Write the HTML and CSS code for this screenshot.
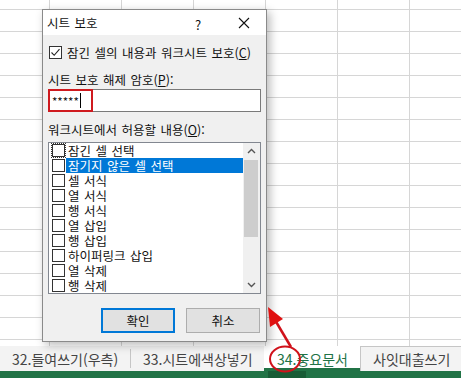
FILE: index.html
```html
<html lang="ko">
<head>
    <meta charset="UTF-8">
    <link rel="stylesheet" href="styles.css">
    <title>시트 보호</title>
</head>
<body>
    <div class="sheet">
        <div class="grid"></div>

        <div class="tabs">
            <div class="tab first">32.들여쓰기(우측)</div>
            <div class="tab sep">33.시트에색상넣기</div>
            <div class="tab active">34.중요문서</div>
            <div class="tab next">사잇대출쓰기</div>
        </div>
        <div class="status"><span class="status-dark"></span></div>

        <div class="dialog">
            <div class="title-bar">
                <span class="title">시트 보호</span>
                <span class="help">?</span>
                <svg class="close" width="12" height="12" viewBox="0 0 12 12">
                    <path d="M1 1 L11 11 M11 1 L1 11" stroke="#111" stroke-width="1.1" fill="none"/>
                </svg>
            </div>
            <div class="dialog-body">
                <div class="check-row">
                    <span class="box checked">
                        <svg width="11" height="11" viewBox="0 0 11 11">
                            <path d="M1.5 5.5 L4.2 8.3 L9.5 2.2" stroke="#222" stroke-width="1.1" fill="none"/>
                        </svg>
                    </span>
                    <span>잠긴 셀의 내용과 워크시트 보호(<u>C</u>)</span>
                </div>
                <div class="label">시트 보호 해제 암호(<u>P</u>):</div>
                <div class="pw">
                    <span class="stars">*****</span><span class="caret"></span>
                    <span class="mark"></span>
                </div>
                <div class="label label-o">워크시트에서 허용할 내용(<u>O</u>):</div>
                <div class="list">
                    <div class="rows">
                        <div class="row"><span class="box focus"></span><span class="text">잠긴 셀 선택</span></div>
                        <div class="row"><span class="box"></span><span class="text selected">잠기지 않은 셀 선택</span></div>
                        <div class="row"><span class="box"></span><span class="text">셀 서식</span></div>
                        <div class="row"><span class="box"></span><span class="text">열 서식</span></div>
                        <div class="row"><span class="box"></span><span class="text">행 서식</span></div>
                        <div class="row"><span class="box"></span><span class="text">열 삽입</span></div>
                        <div class="row"><span class="box"></span><span class="text">행 삽입</span></div>
                        <div class="row"><span class="box"></span><span class="text">하이퍼링크 삽입</span></div>
                        <div class="row"><span class="box"></span><span class="text">열 삭제</span></div>
                        <div class="row"><span class="box"></span><span class="text">행 삭제</span></div>
                    </div>
                    <div class="scrollbar">
                        <svg class="arrow" width="17" height="16" viewBox="0 0 17 16">
                            <path d="M5 10 L8.5 6.5 L12 10" stroke="#555" stroke-width="1.4" fill="none"/>
                        </svg>
                        <div class="thumb"></div>
                        <div class="track"></div>
                        <svg class="arrow" width="17" height="16" viewBox="0 0 17 16">
                            <path d="M5 6 L8.5 9.5 L12 6" stroke="#555" stroke-width="1.4" fill="none"/>
                        </svg>
                    </div>
                </div>
                <div class="buttons">
                    <button type="button" class="btn default">확인</button>
                    <button type="button" class="btn">취소</button>
                </div>
            </div>
        </div>

        <svg class="annot" width="461" height="378" viewBox="0 0 461 378">
            <ellipse cx="285" cy="359" rx="15" ry="12.5" stroke="#d0121b" stroke-width="2" fill="none"/>
            <path d="M291 347 L275 320" stroke="#d0121b" stroke-width="2.5" fill="none"/>
            <polygon points="268,307 283,319 270,327" fill="#e01010"/>
        </svg>
    </div>
</body>
</html>
```

FILE: styles.css
```css
body {
    margin: 0;
    background-color: #ffffff;
    font-family: "Noto Sans CJK KR", "Noto Sans", sans-serif;
}

.sheet {
    position: relative;
    width: 461px;
    height: 378px;
    display: flex;
    flex-direction: column;
    overflow: hidden;
}

/* grille Excel */
.grid {
    height: 346px;
    background-color: #ffffff;
    background-image:
        linear-gradient(#d6d6d6 1px, transparent 1px),
        linear-gradient(90deg, #d6d6d6 1px, transparent 1px);
    background-size: 72px 22px;
    background-position: 49px 9px;
}

.tabs {
    height: 25px;
    display: flex;
    background-color: #f3f3f3;
    font-size: 14px;
    color: #444;
}

.tab {
    display: flex;
    align-items: center;
    flex: none;
    box-sizing: border-box;
    line-height: 1;
    white-space: nowrap;
}

.tab.first {
    width: 130px;
    padding-left: 12px;
}

.tab.sep {
    width: 134px;
    border-left: 1px solid #c6c6c6;
    margin: 3px 0;
    padding-left: 12px;
}

.tab.active {
    width: 96px;
    background-color: #ffffff;
    color: #217346;
    border-bottom: 3px solid #217346;
    padding: 3px 0 0 13px;
}

.tab.next {
    border-left: 1px solid #c6c6c6;
    border-top: 1px solid #c6c6c6;
    padding-left: 12px;
    flex: 1;
}

.status {
    height: 7px;
    background-color: #217346;
    display: flex;
}

.status-dark {
    margin-left: 268px;
    width: 38px;
    background-color: #185c36;
}

/* boîte de dialogue */
.dialog {
    position: absolute;
    left: 42px;
    top: 9px;
    width: 223px;
    height: 331px;
    border: 1px solid #8a8a8a;
    background-color: #f0f0f0;
    box-shadow: 3px 3px 9px rgba(0, 0, 0, 0.28);
    font-size: 12.5px;
    word-spacing: 1px;
    color: #111;
}

.title-bar {
    height: 25px;
    background-color: #ffffff;
    display: flex;
    align-items: center;
    position: relative;
}

.title {
    margin-left: 4px;
}

.help {
    position: absolute;
    left: 152px;
    top: 5px;
    font-size: 13px;
}

.close {
    position: absolute;
    left: 195px;
    top: 7px;
}

.dialog-body {
    padding: 0 5px;
}

.check-row {
    display: flex;
    align-items: center;
    height: 16px;
    margin-top: 9px;
    margin-left: 1px;
}

.box {
    width: 11px;
    height: 11px;
    border: 1px solid #333;
    background-color: #ffffff;
    flex: none;
    display: flex;
}

.check-row .box {
    margin-right: 5px;
}

.box.focus {
    outline: 1px dotted #333;
}

.label {
    height: 16px;
    line-height: 16px;
    margin-top: 12px;
}

.pw {
    position: relative;
    height: 21px;
    margin-top: 1px;
    border: 1px solid #7a7a7a;
    background-color: #ffffff;
    display: flex;
    align-items: center;
}

.stars {
    margin-left: 3px;
    font-size: 11.5px;
    letter-spacing: 0;
}

.caret {
    width: 1px;
    height: 15px;
    background-color: #000;
    margin-left: 1px;
}

.mark {
    position: absolute;
    left: -1px;
    top: -1px;
    width: 41px;
    height: 19px;
    border: 2px solid #cf1a1f;
}

.label-o {
    margin-top: 10px;
}

.list {
    margin-top: 4px;
    height: 150px;
    border: 1px solid #828790;
    background-color: #ffffff;
    display: flex;
}

.rows {
    width: 194px;
    padding-left: 3px;
}

.row {
    height: 15px;
    display: flex;
    align-items: center;
}

.text {
    margin-left: 1px;
    padding-left: 2px;
    height: 15px;
    line-height: 15px;
}

.text.selected {
    background-color: #0078d7;
    color: #ffffff;
    flex: 1;
}

.scrollbar {
    width: 17px;
    background-color: #f0f0f0;
    display: flex;
    flex-direction: column;
}

.arrow {
    flex: none;
}

.thumb {
    height: 77px;
    margin: 1px 2px 0 1px;
    background-color: #cdcdcd;
}

.track {
    flex: 1;
}

.buttons {
    display: flex;
    justify-content: flex-end;
    gap: 11px;
    margin-top: 14px;
    margin-right: 1px;
}

.btn {
    width: 74px;
    height: 25px;
    font-family: inherit;
    font-size: 12.5px;
    color: #111;
    background-color: #e1e1e1;
    border: 1px solid #adadad;
    padding: 0;
}

.btn.default {
    border: 2px solid #0078d7;
}

.annot {
    position: absolute;
    left: 0;
    top: 0;
}
```
